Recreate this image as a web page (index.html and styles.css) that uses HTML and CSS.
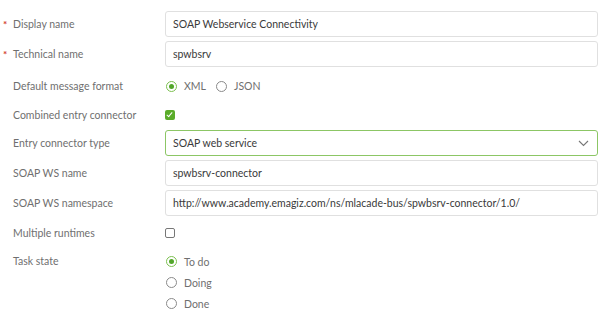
FILE: index.html
```html
<!DOCTYPE html>
<html lang="en">
<head>
    <meta charset="UTF-8">
    <meta name="viewport" content="width=device-width, initial-scale=1.0">
    <title>Entry connector</title>
    <link rel="stylesheet" href="styles.css">
</head>
<body>

    <form class="conn-form">
        <div class="row">
            <label class="field-label required" for="displayName">Display name</label>
            <input class="text-input" type="text" id="displayName" value="SOAP Webservice Connectivity">
        </div>

        <div class="row">
            <label class="field-label required" for="technicalName">Technical name</label>
            <input class="text-input" type="text" id="technicalName" value="spwbsrv">
        </div>

        <div class="row row-radio">
            <span class="field-label">Default message format</span>
            <div class="inline-options">
                <label class="option"><input type="radio" name="format" checked> XML</label>
                <label class="option"><input type="radio" name="format"> JSON</label>
            </div>
        </div>

        <div class="row row-check">
            <span class="field-label">Combined entry connector</span>
            <div><input type="checkbox" checked></div>
        </div>

        <div class="row">
            <label class="field-label" for="entryType">Entry connector type</label>
            <div class="select-wrap">
                <select class="text-input select-input" id="entryType">
                    <option>SOAP web service</option>
                </select>
                <svg class="chevron" width="11" height="7" viewBox="0 0 11 7"><path d="M1 1l4.5 4.5L10 1" fill="none" stroke="#777" stroke-width="1.1"/></svg>
            </div>
        </div>

        <div class="row">
            <label class="field-label" for="wsName">SOAP WS name</label>
            <input class="text-input" type="text" id="wsName" value="spwbsrv-connector">
        </div>

        <div class="row">
            <label class="field-label" for="wsNamespace">SOAP WS namespace</label>
            <input class="text-input" type="text" id="wsNamespace" value="http://www.academy.emagiz.com/ns/mlacade-bus/spwbsrv-connector/1.0/">
        </div>

        <div class="row">
            <span class="field-label">Multiple runtimes</span>
            <div><input type="checkbox"></div>
        </div>

        <div class="row row-task">
            <span class="field-label task-label">Task state</span>
            <div class="stacked-options">
                <label class="option"><input type="radio" name="task" checked> To do</label>
                <label class="option"><input type="radio" name="task"> Doing</label>
                <label class="option"><input type="radio" name="task"> Done</label>
            </div>
        </div>
    </form>

</body>
</html>
```

FILE: styles.css
```css
body {
    margin: 0;
    font-family: Lato, "Open Sans", sans-serif;
    font-size: 10.5px;
    background-color: #fff;
    color: #333;
}

.conn-form {
    padding: 9px 7px 0 0;
}

.row {
    display: grid;
    grid-template-columns: 165px 1fr;
    align-items: center;
    height: 30px;
}

.row-radio {
    height: 32px;
    padding-top: 1px;
}

.row-check {
    height: 26px;
}

.row-task {
    align-items: start;
    padding-top: 3px;
    height: auto;
}

.field-label {
    position: relative;
    padding-left: 13px;
    color: #6f6f6f;
}

.task-label {
    line-height: 21px;
}

.field-label.required::before {
    content: "*";
    position: absolute;
    left: 3px;
    top: 0;
    color: #d33a2c;
    font-size: 10px;
    font-weight: bold;
}

.text-input {
    box-sizing: border-box;
    width: 100%;
    height: 26px;
    padding: 0 7px;
    border: 1px solid #e0e0e0;
    border-radius: 3px;
    font-family: inherit;
    font-size: 10.5px;
    color: #3a3a3a;
    background-color: #fff;
}

.select-wrap {
    position: relative;
}

.select-input {
    appearance: none;
    border-color: #8cc665;
    outline: none;
}

.chevron {
    position: absolute;
    right: 9px;
    top: 10px;
}

.inline-options {
    display: flex;
    gap: 9px;
}

.stacked-options {
    display: flex;
    flex-direction: column;
}

.option {
    display: flex;
    align-items: center;
    gap: 7px;
    height: 21px;
    color: #6f6f6f;
}

input[type="radio"] {
    appearance: none;
    box-sizing: border-box;
    width: 11px;
    height: 11px;
    margin: 0 0 0 1px;
    border: 1px solid #8a8a8a;
    border-radius: 50%;
    display: grid;
    place-items: center;
}

input[type="radio"]:checked {
    border-color: #7cc04f;
}

input[type="radio"]:checked::after {
    content: "";
    width: 5px;
    height: 5px;
    border-radius: 50%;
    background-color: #52a62a;
}

input[type="checkbox"] {
    appearance: none;
    box-sizing: border-box;
    display: block;
    width: 10px;
    height: 10px;
    margin: 0;
    border: 1px solid #777;
    border-radius: 2px;
    position: relative;
}

input[type="checkbox"]:checked {
    border: none;
    background-color: #5aac2a;
}

input[type="checkbox"]:checked::after {
    content: "";
    position: absolute;
    left: 3px;
    top: 1px;
    width: 2px;
    height: 5px;
    border: solid #fff;
    border-width: 0 1.5px 1.5px 0;
    transform: rotate(40deg);
}
```
